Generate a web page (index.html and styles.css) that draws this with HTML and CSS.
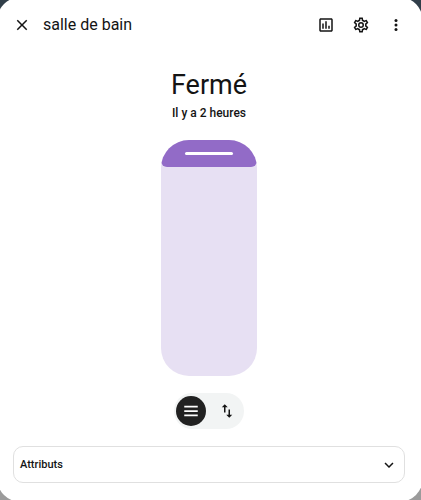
FILE: index.html
```html
<!DOCTYPE html>
<html lang="fr">
<head>
<meta charset="utf-8">
<meta name="viewport" content="width=device-width, initial-scale=1">
<title>salle de bain</title>
<link rel="stylesheet" href="styles.css">
</head>
<body>
<main class="dialog">
  <header class="header">
    <button class="icon-button" type="button" aria-label="Fermer">
      <svg class="icon" viewBox="0 0 24 24"><path d="M19 6.41 17.59 5 12 10.59 6.41 5 5 6.41 10.59 12 5 17.59 6.41 19 12 13.41 17.59 19 19 17.59 13.41 12z"/></svg>
    </button>
    <h1 class="title">salle de bain</h1>
    <div class="actions">
      <button class="icon-button" type="button" aria-label="Historique">
        <svg class="icon" viewBox="0 0 24 24"><path d="M9 17H7V10H9V17M13 17H11V7H13V17M17 17H15V13H17V17M19 19H5V5H19V19.1M19 3H5C3.9 3 3 3.9 3 5V19C3 20.1 3.9 21 5 21H19C20.1 21 21 20.1 21 19V5C21 3.9 20.1 3 19 3Z"/></svg>
      </button>
      <button class="icon-button" type="button" aria-label="Paramètres">
        <svg class="icon" viewBox="0 0 24 24"><path d="M12 8A4 4 0 0 1 16 12A4 4 0 0 1 12 16A4 4 0 0 1 8 12A4 4 0 0 1 12 8M12 10A2 2 0 0 0 10 12A2 2 0 0 0 12 14A2 2 0 0 0 14 12A2 2 0 0 0 12 10M10 22C9.75 22 9.54 21.82 9.5 21.58L9.13 18.93C8.5 18.68 7.96 18.34 7.44 17.94L4.95 18.95C4.73 19.03 4.46 18.95 4.34 18.73L2.34 15.27C2.21 15.05 2.27 14.78 2.46 14.63L4.57 12.97L4.5 12L4.57 11L2.46 9.37C2.27 9.22 2.21 8.95 2.34 8.73L4.34 5.27C4.46 5.05 4.73 4.96 4.95 5.05L7.44 6.05C7.96 5.66 8.5 5.32 9.13 5.07L9.5 2.42C9.54 2.18 9.75 2 10 2H14C14.25 2 14.46 2.18 14.5 2.42L14.87 5.07C15.5 5.32 16.04 5.66 16.56 6.05L19.05 5.05C19.27 4.96 19.54 5.05 19.66 5.27L21.66 8.73C21.79 8.95 21.73 9.22 21.54 9.37L19.43 11L19.5 12L19.43 13L21.54 14.63C21.73 14.78 21.79 15.05 21.66 15.27L19.66 18.73C19.54 18.95 19.27 19.04 19.05 18.95L16.56 17.95C16.04 18.34 15.5 18.68 14.87 18.93L14.5 21.58C14.46 21.82 14.25 22 14 22H10M11.25 4L10.88 6.61C9.68 6.86 8.62 7.5 7.85 8.39L5.44 7.35L4.69 8.65L6.8 10.2C6.4 11.37 6.4 12.64 6.8 13.8L4.68 15.36L5.43 16.66L7.86 15.62C8.63 16.5 9.68 17.14 10.87 17.38L11.24 20H12.76L13.13 17.39C14.32 17.14 15.37 16.5 16.14 15.62L18.57 16.66L19.32 15.36L17.2 13.81C17.6 12.64 17.6 11.37 17.2 10.2L19.31 8.65L18.56 7.35L16.15 8.39C15.38 7.5 14.32 6.86 13.12 6.62L12.75 4H11.25Z"/></svg>
      </button>
      <button class="icon-button" type="button" aria-label="Menu">
        <svg class="icon" viewBox="0 0 24 24"><circle cx="12" cy="6" r="2"/><circle cx="12" cy="12" r="2"/><circle cx="12" cy="18" r="2"/></svg>
      </button>
    </div>
  </header>

  <section class="content">
    <p class="state">Fermé</p>
    <p class="changed">Il y a 2 heures</p>
    <label class="cover">
      <span class="cover-fill"><span class="cover-handle"></span></span>
      <input class="cover-input" type="range" min="0" max="100" value="0" aria-label="Position">
    </label>
    <div class="modes">
      <button class="mode mode-active" type="button" aria-label="Position" aria-pressed="true">
        <svg class="icon" viewBox="0 0 24 24"><path d="M3 5h18v2.3H3zM3 10.9h18v2.3H3zM3 16.7h18V19H3z"/></svg>
      </button>
      <button class="mode" type="button" aria-label="Boutons" aria-pressed="false">
        <svg class="icon" viewBox="0 0 24 24"><path d="M9 3 5 6.99h3V14h2V6.99h3L9 3zm7 14.01V10h-2v7.01h-3L15 21l4-3.99h-3z"/></svg>
      </button>
    </div>
  </section>

  <button class="attributes" type="button" aria-expanded="false">
    <span>Attributs</span>
    <svg class="icon" viewBox="0 0 24 24"><path d="M7.41 8.58 12 13.17l4.59-4.59L18 10l-6 6-6-6z"/></svg>
  </button>
</main>
</body>
</html>
```
FILE: styles.css
```css
* {
  box-sizing: border-box;
}

body {
  margin: 0;
  min-height: 100vh;
  display: flex;
  overflow: hidden;
  background: linear-gradient(#303e49 50%, #9b9b9b 50%);
  color: #141414;
  font-family: Roboto, "Liberation Sans", sans-serif;
}

button {
  margin: 0;
  padding: 0;
  border: 0;
  background: none;
  color: inherit;
  font: inherit;
  cursor: pointer;
}

.dialog {
  flex: 1;
  display: flex;
  flex-direction: column;
  margin: -3px -2px -2px -3px;
  padding: 12px 18px 19px 16px;
  border-radius: 24px;
  background: #fff;
}

.header {
  display: flex;
  align-items: center;
  gap: 12px;
}

.icon-button {
  display: grid;
  place-items: center;
  width: 18px;
  height: 32px;
}

.icon {
  display: block;
  width: 18px;
  height: 18px;
  fill: currentColor;
}

.title {
  margin: 0;
  font-size: 16px;
  line-height: 32px;
  font-weight: 400;
}

.actions {
  display: flex;
  gap: 17px;
  margin-left: auto;
}

.content {
  display: flex;
  flex-direction: column;
  align-items: center;
  padding-top: 26px;
}

.state {
  margin: 0;
  font-size: 27px;
  line-height: 36px;
}

.changed {
  margin: 0;
  font-size: 12px;
  line-height: 20px;
  font-weight: 500;
}

.cover {
  position: relative;
  width: 96px;
  height: 236px;
  margin-top: 17px;
  border-radius: 28px;
  overflow: hidden;
  background: #e7e0f3;
}

.cover-fill {
  display: flex;
  justify-content: center;
  height: 27px;
  padding-top: 12px;
  border-radius: 0 0 6px 6px;
  background: #926bc7;
}

.cover-handle {
  width: 48px;
  height: 3px;
  border-radius: 2px;
  background: #fff;
}

.cover-input {
  position: absolute;
  inset: 0;
  width: 100%;
  height: 100%;
  margin: 0;
  opacity: 0;
  writing-mode: vertical-lr;
}

.modes {
  display: flex;
  gap: 6px;
  margin-top: 17px;
  padding: 3px 2px;
  border-radius: 18px;
  background: #f2f4f4;
}

.mode {
  display: grid;
  place-items: center;
  width: 30px;
  height: 30px;
  border-radius: 50%;
}

.mode-active {
  background: #212121;
  color: #fff;
}

.attributes {
  display: flex;
  align-items: center;
  justify-content: space-between;
  height: 37px;
  margin-top: auto;
  padding: 0 6px;
  border: 1px solid #e0e0e0;
  border-radius: 10px;
  font-size: 11px;
  font-weight: 500;
}
```
